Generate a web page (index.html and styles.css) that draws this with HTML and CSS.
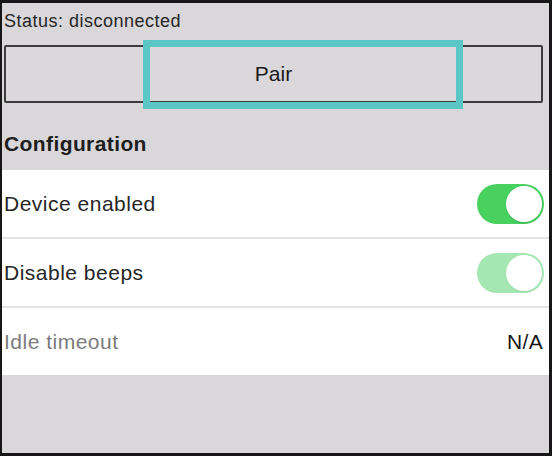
FILE: index.html
```html
<!DOCTYPE html>
<html>
<head>
<meta charset="utf-8">
<link rel="stylesheet" href="styles.css">
</head>
<body>
<div class="frame">
  <div class="status">Status: disconnected</div>
  <div class="pair-wrap">
    <button class="pair">Pair</button>
    <div class="focus-ring"></div>
  </div>
  <div class="section-title">Configuration</div>
  <div class="list">
    <div class="row">
      <span class="label">Device enabled</span>
      <span class="toggle"><span class="thumb"></span></span>
    </div>
    <div class="row">
      <span class="label">Disable beeps</span>
      <span class="toggle faded"><span class="thumb"></span></span>
    </div>
    <div class="row">
      <span class="label muted">Idle timeout</span>
      <span class="value">N/A</span>
    </div>
  </div>
</div>
</body>
</html>
```
FILE: styles.css
```css
html, body {
  margin: 0;
  padding: 0;
}
body {
  width: 552px;
  height: 456px;
  overflow: hidden;
  font-family: "Liberation Sans", Arial, sans-serif;
  color: #222;
}
.frame {
  box-sizing: border-box;
  width: 552px;
  height: 456px;
  border-style: solid;
  border-color: #161616;
  border-width: 3px 3px 3px 2px;
  background: #d9d7da;
  display: flex;
  flex-direction: column;
}
.status {
  font-size: 18px;
  letter-spacing: 0.5px;
  line-height: 20px;
  padding: 8px 0 0 2px;
  height: 26px;
  color: #262626;
}
.pair-wrap {
  position: relative;
  margin: 8px 0 0 2px;
  width: 539px;
  height: 58px;
}
.pair {
  box-sizing: border-box;
  width: 100%;
  height: 100%;
  margin: 0;
  border: 2px solid #3b3b3b;
  border-radius: 2px;
  background: #dad8db;
  font-family: "Liberation Sans", Arial, sans-serif;
  font-size: 21px;
  color: #1a1a1a;
  padding: 0;
}
.focus-ring {
  position: absolute;
  box-sizing: border-box;
  left: 139px;
  top: -5px;
  width: 320px;
  height: 69px;
  border: 7px solid #5ac7c6;
  pointer-events: none;
}
.section-title {
  font-size: 21px;
  letter-spacing: 0.4px;
  font-weight: bold;
  line-height: 24px;
  padding: 29px 0 0 2px;
  height: 38px;
  color: #1e1e1e;
}
.list {
  background: #fff;
  display: flex;
  flex-direction: column;
}
.row {
  display: flex;
  align-items: center;
  justify-content: space-between;
  padding: 0 5px 0 2px;
  height: 67px;
  border-bottom: 2px solid #e3e2e5;
}
.row:last-child {
  border-bottom: none;
  height: 67px;
}
.label {
  font-size: 21px;
  letter-spacing: 0.5px;
  color: #262626;
}
.label.muted {
  color: #7b7b7b;
}
.value {
  font-size: 21px;
  letter-spacing: 0.3px;
  color: #151515;
  padding-right: 1px;
}
.toggle {
  position: relative;
  width: 67px;
  height: 40px;
  border-radius: 20px;
  background: #48d15f;
  display: flex;
  align-items: center;
  justify-content: flex-end;
  padding-right: 2px;
  box-sizing: border-box;
}
.toggle.faded {
  background: #a5e7b2;
}
.thumb {
  width: 36px;
  height: 36px;
  border-radius: 50%;
  background: #fff;
  box-shadow: 0 1px 2px rgba(0,0,0,0.15);
}
.toggle.faded .thumb {
  box-shadow: 0 1px 2px rgba(0,80,20,0.08);
}
```
